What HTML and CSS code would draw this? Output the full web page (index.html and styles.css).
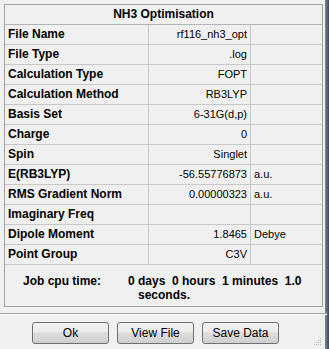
FILE: index.html
```html
<!DOCTYPE html>
<html>
<head>
<meta charset="utf-8">
<link rel="stylesheet" href="styles.css">
</head>
<body>
<div class="window">
  <div class="main">
    <div class="panel">
      <div class="title">NH3 Optimisation</div>
      <div class="row"><div class="lab">File Name</div><div class="val">rf116_nh3_opt</div><div class="unit"></div></div>
      <div class="row"><div class="lab">File Type</div><div class="val">.log</div><div class="unit"></div></div>
      <div class="row"><div class="lab">Calculation Type</div><div class="val">FOPT</div><div class="unit"></div></div>
      <div class="row"><div class="lab">Calculation Method</div><div class="val">RB3LYP</div><div class="unit"></div></div>
      <div class="row"><div class="lab">Basis Set</div><div class="val">6-31G(d,p)</div><div class="unit"></div></div>
      <div class="row"><div class="lab">Charge</div><div class="val">0</div><div class="unit"></div></div>
      <div class="row"><div class="lab">Spin</div><div class="val">Singlet</div><div class="unit"></div></div>
      <div class="row"><div class="lab">E(RB3LYP)</div><div class="val">-56.55776873</div><div class="unit">a.u.</div></div>
      <div class="row"><div class="lab">RMS Gradient Norm</div><div class="val">0.00000323</div><div class="unit">a.u.</div></div>
      <div class="row"><div class="lab">Imaginary Freq</div><div class="val"></div><div class="unit"></div></div>
      <div class="row"><div class="lab">Dipole Moment</div><div class="val">1.8465</div><div class="unit">Debye</div></div>
      <div class="row"><div class="lab">Point Group</div><div class="val">C3V</div><div class="unit"></div></div>
      <div class="job">
        <div class="job-lab">Job cpu time:</div>
        <div class="job-val"><div>0 days&nbsp; 0 hours&nbsp; 1 minutes&nbsp; 1.0</div><div class="l2">seconds.</div></div>
      </div>
    </div>
    <div class="sep"></div>
    <div class="buttons">
      <div class="btn">Ok</div>
      <div class="btn">View File</div>
      <div class="btn">Save Data</div>
    </div>
    <div class="grip">
      <svg width="12" height="12" viewBox="0 0 12 12">
        <g fill="#b8b8b8">
          <rect x="9" y="3" width="1" height="1"/>
          <rect x="7" y="5" width="1" height="1"/><rect x="9" y="5" width="1" height="1"/>
          <rect x="5" y="7" width="1" height="1"/><rect x="7" y="7" width="1" height="1"/><rect x="9" y="7" width="1" height="1"/>
          <rect x="3" y="9" width="1" height="1"/><rect x="5" y="9" width="1" height="1"/><rect x="7" y="9" width="1" height="1"/><rect x="9" y="9" width="1" height="1"/>
        </g>
      </svg>
    </div>
  </div>
  <div class="frame"></div>
</div>
</body>
</html>
```
FILE: styles.css
```css
* { box-sizing: border-box; }
html, body { margin: 0; padding: 0; background: #f0f0f0; }
body { font-family: "Liberation Sans", Arial, sans-serif; font-size: 11px; color: #000; }
.window { display: flex; width: 329px; height: 349px; }
.main { position: relative; width: 325px; padding: 4px 0 0 4px; }
.frame { width: 4px; background: linear-gradient(to right, #7a8796, #3d4a5a); }
.panel { width: 319px; border: 1px solid #a0a0a0; }
.title { height: 20px; border-bottom: 1px solid #b4b4b4; text-align: center; font-weight: bold; font-size: 12px; line-height: 19px; }
.row { display: grid; grid-template-columns: 143px 1px 101px 1px 71px; height: 20px; border-bottom: 1px solid #c8c8c8; }
.row > div { line-height: 19px; white-space: nowrap; }
.lab { grid-column: 1; padding-left: 3px; font-weight: bold; font-size: 12px; }
.val { grid-column: 3; text-align: right; padding-right: 3px; border-left: 1px solid #c8c8c8; margin-left: -1px; }
.unit { grid-column: 5; padding-left: 3px; border-left: 1px solid #c8c8c8; margin-left: -1px; }
.val, .unit { font-size: 11px; }
.job { display: flex; height: 41px; padding-top: 9px; font-weight: bold; font-size: 12px; line-height: 14px; }
.job-lab { width: 123px; padding-left: 18px; }
.job-val .l2 { padding-left: 10px; }
.sep { height: 2px; margin: 6px 0 0 -4px; width: 327px; border-top: 1px solid #a0a0a0; border-bottom: 1px solid #fff; }
.buttons { display: flex; gap: 8px; padding: 7px 0 0 28px; }
.btn { width: 77px; height: 22px; border: 1px solid #707070; border-radius: 3px; background: linear-gradient(#f2f2f2 0%, #ebebeb 45%, #dddddd 50%, #cfcfcf 100%); text-align: center; line-height: 20px; font-size: 12px; }
.grip { position: absolute; right: 2px; bottom: 2px; width: 12px; height: 12px; }
```
